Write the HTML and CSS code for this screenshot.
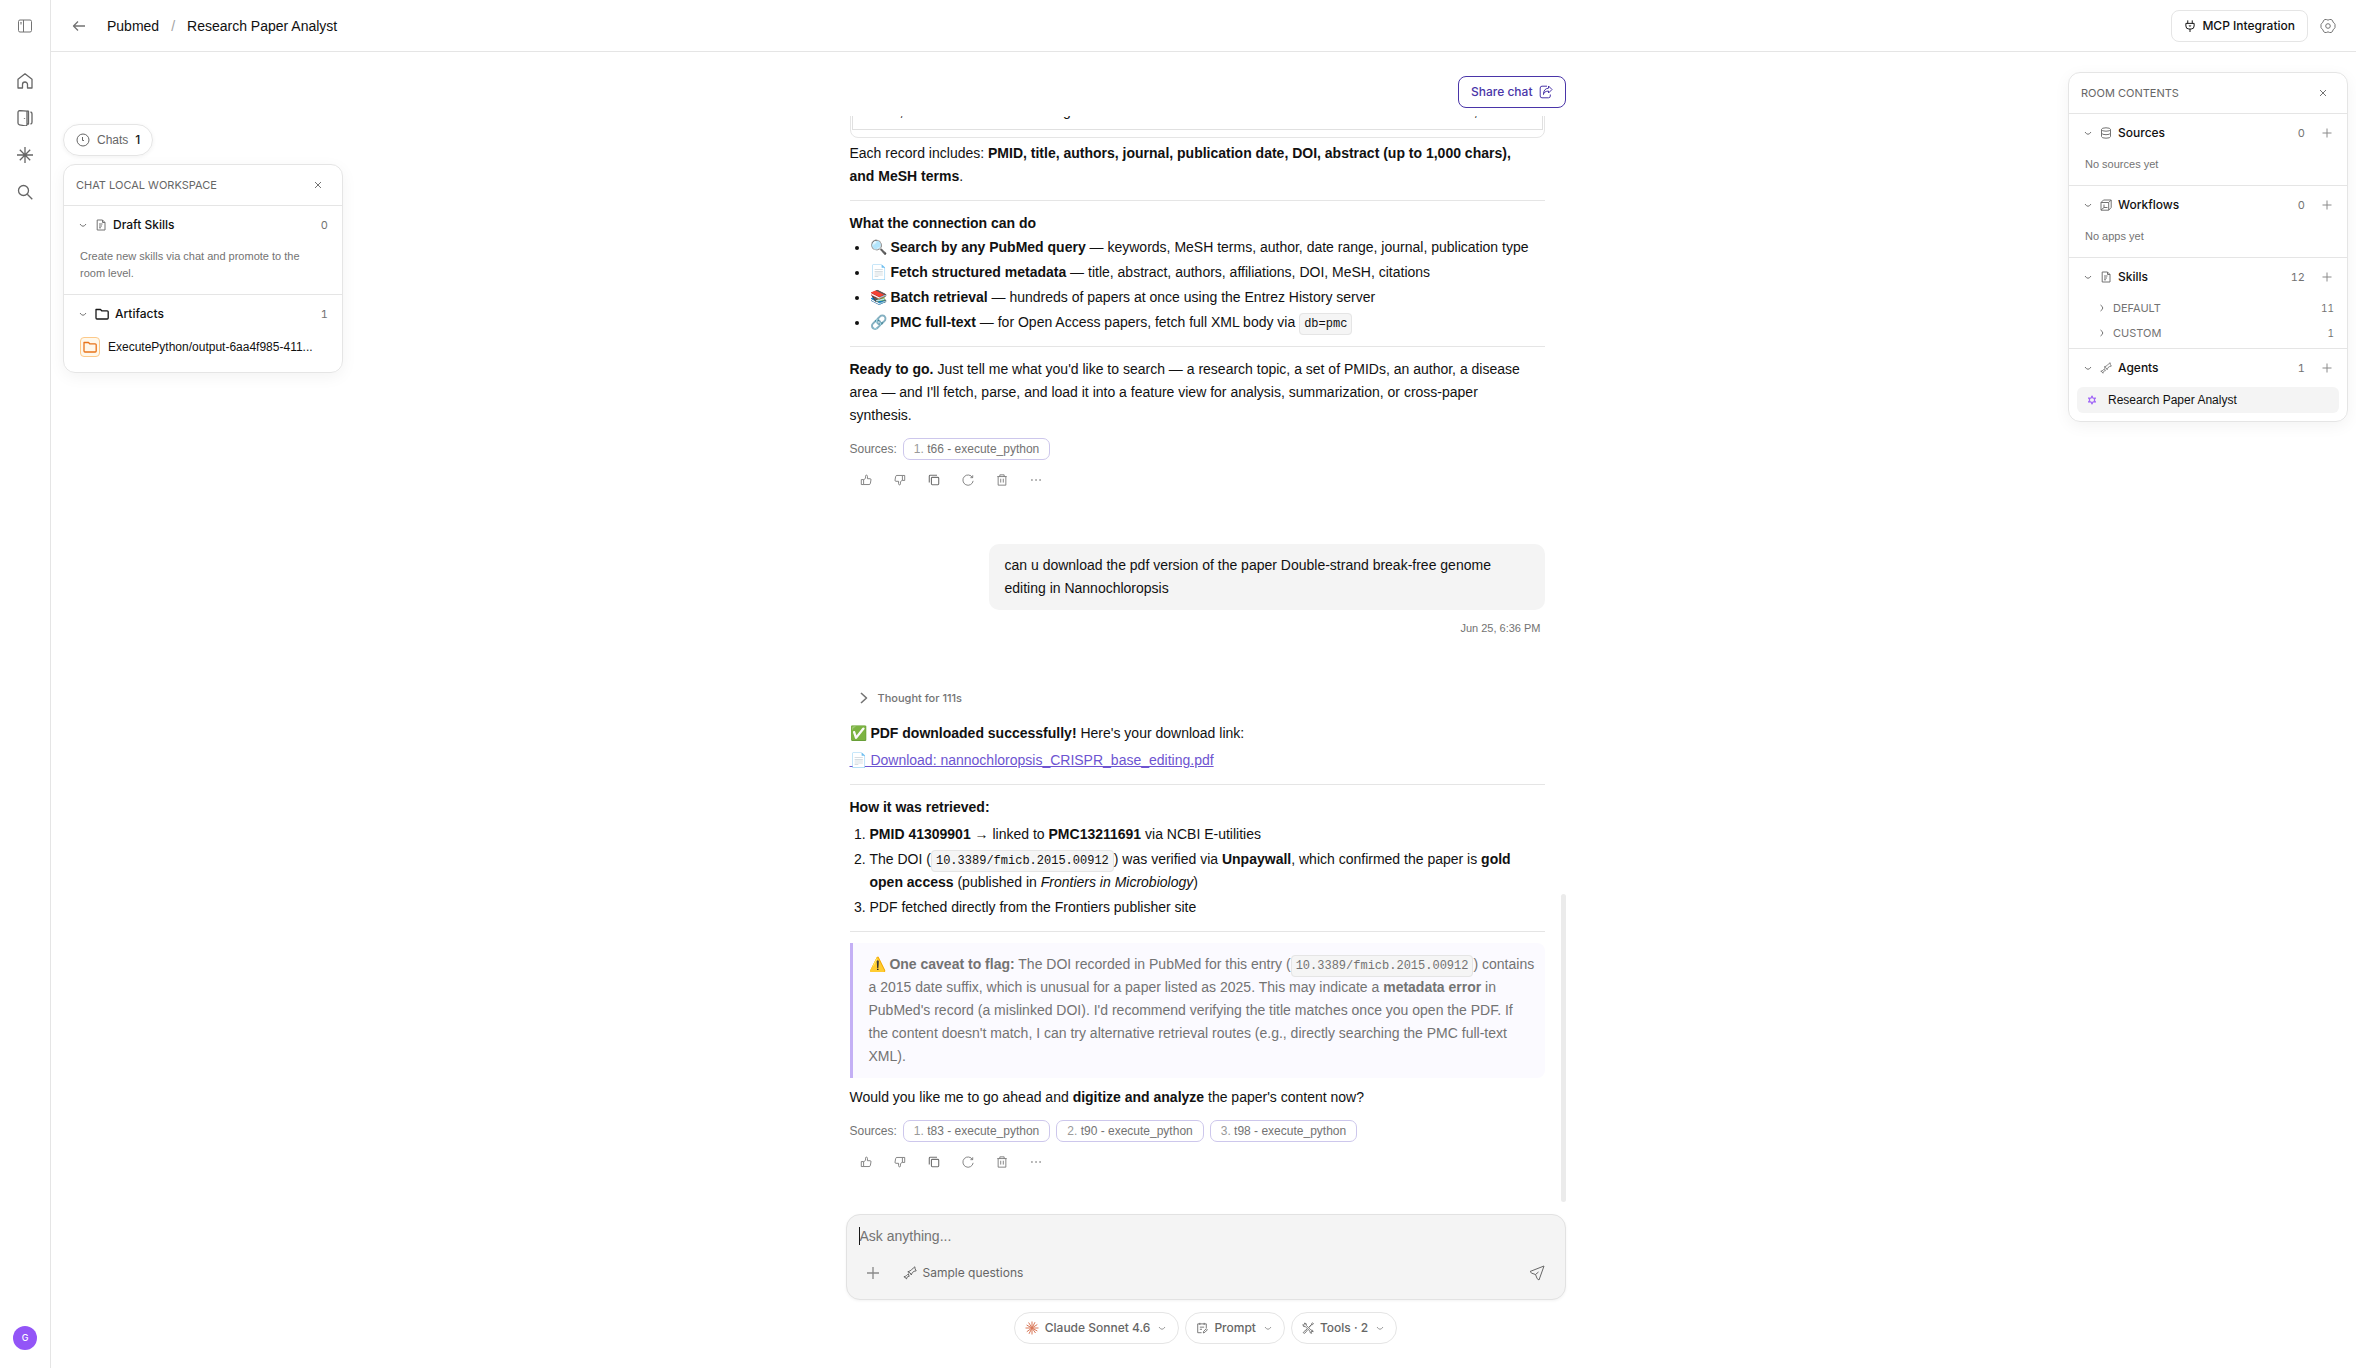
FILE: index.html
```
<!DOCTYPE html>
<html lang="en">
<head>
    <meta charset="UTF-8">
    <title>Research Paper Analyst</title>
    <link rel="stylesheet" href="styles.css">
</head>
<body>
<svg class="sprite" aria-hidden="true">
    <symbol id="i-panel" viewBox="0 0 16 16"><rect x="1.5" y="2" width="13" height="12" rx="1.5"/><path d="M6.5 2v12M3.5 4.5h1M4 4.5v2"/></symbol>
    <symbol id="i-home" viewBox="0 0 16 16"><path d="M1 6.200 8 .8l7 5.400V15h-4.500v-3.500a2.500 2.500 0 0 0-5 0V15H1z"/></symbol>
    <symbol id="i-door" viewBox="0 0 16 16"><path d="M10 1.200 3 .6Q1 .6 1 2.600V13q0 1.500 1.500 1.800L8 15.800q2 .2 2-1.500z"/><path d="M10 1.200h1.500V14H10M13.500 2q1.500.3 1.500 1.800v8.400q0 1.500-1.500 1.800"/><path d="M7.500 8v.8"/></symbol>
    <symbol id="i-star" viewBox="0 0 16 16"><path d="M8 0v16M0 8h16M2.800 2.800l10.400 10.400M13.200 2.800 2.800 13.200"/></symbol>
    <symbol id="i-search" viewBox="0 0 16 16"><circle cx="6.500" cy="6.500" r="5"/><path d="m10.300 10.300 5 5"/></symbol>
    <symbol id="i-back" viewBox="0 0 16 16"><path d="M14 8H2.500M7 3.500 2.500 8 7 12.500"/></symbol>
    <symbol id="i-plug" viewBox="0 0 16 16"><path d="M5 .5v4M11 .5v4M2.500 4.500h11V8q0 4-4 4h-3q-4 0-4-4zM8 12v4M6.500 7.500q1.500 1.500 3 0"/></symbol>
    <symbol id="i-gear" viewBox="0 0 16 16"><path d="M5 1.500h1.300q1.700 1.300 3.400 0H11l1.500.9q.2 2.200 2 3l.5 1V9.500l-.5 1q-1.800.8-2 3L11 14.500H9.700q-1.700-1.300-3.400 0H5l-1.500-1q-.2-2.200-2-3L1 9.500v-3l.5-1q1.800-.8 2-3z"/><circle cx="8" cy="8" r="2.300"/></symbol>
    <symbol id="i-clock" viewBox="0 0 14 14"><circle cx="7" cy="7" r="6"/><path d="M6.500 4v3.500H8"/></symbol>
    <symbol id="i-close" viewBox="0 0 8 8"><path d="m1 1 6 6M7 1 1 7"/></symbol>
    <symbol id="i-down" viewBox="0 0 12 12"><path d="M3 5q3 4.500 6 0"/></symbol>
    <symbol id="i-right" viewBox="0 0 12 12"><path d="M4.500 3q4.500 3 0 6"/></symbol>
    <symbol id="i-doc" viewBox="0 0 12 12"><path d="M2.200 1h5.300L10 3.500V11H2.200zM7.500 1v2.500H10M4 5h3.500M4 7h3M4 8.800h2"/></symbol>
    <symbol id="i-folder" viewBox="0 0 14 14"><path d="M1 2.500h4.500l1.200 1.300h5.500q1 0 1 1V11q0 1-1 1H2q-1 0-1-1z"/></symbol>
    <symbol id="i-db" viewBox="0 0 12 12"><ellipse cx="6" cy="2.500" rx="4.500" ry="1.700"/><path d="M1.500 2.500v7q0 1.700 4.500 1.700t4.500-1.700v-7M1.500 6q0 1.700 4.500 1.700T10.500 6"/></symbol>
    <symbol id="i-flow" viewBox="0 0 12 12"><path d="M3.500 1h7.700v7.500l-2.500 2.700H1V3.500zM1 3.500h7.700v7.700M8.700 3.500 11.200 1M4 5.500v3h3.500M4 8.500 1 11"/></symbol>
    <symbol id="i-spark" viewBox="0 0 14 14"><path d="M11.800.8Q11.700 3 13.200 4.800 11 5 9.400 6.500 8.600 8 8.300 9 7.800 6.600 4.800 5.800 7.500 5 8.600 3.600 10.300 2.200 11.800.8z"/><path d="M5.500 7.800q-.2 1.300.8 2.400-1.600.2-2.200 1-.5 1-.6 1.900-.4-1.700-2.600-2.300 1.700-.4 2.500-1.200.9-1 2.100-1.800z"/></symbol>
    <symbol id="i-plus" viewBox="0 0 12 12"><path d="M6 1.500v9M1.500 6h9"/></symbol>
    <symbol id="i-agent" viewBox="0 0 12 12"><path d="m6 1.200 1.300 2.600 2.900-.2L8.600 6l1.600 2.400-2.900-.2L6 10.800 4.700 8.200l-2.900.2L3.400 6 1.800 3.600l2.900.2z"/></symbol>
    <symbol id="i-share" viewBox="0 0 14 14"><path d="M8 1.200H3q-1.800 0-1.800 1.800v8q0 1.800 1.800 1.800h6.500q1.800 0 1.800-1.800V9.500"/><path d="M4.500 9.500q0-3 5-3.500v2l3.500-3.500L9.500 1v2.200Q4.500 3.500 4.500 9.500z"/></symbol>
    <symbol id="i-up" viewBox="0 0 14 14"><path d="M1.500 6.500h2.700v5.800H1.500zM4.200 6.800 6.500 5V2.500q0-1.200 1-1.200 1.200 0 1.200 1.700V5.500h3q1.300 0 1.100 1.300l-.7 4.200q-.2 1.300-1.500 1.300H4.200"/></symbol>
    <symbol id="i-copy" viewBox="0 0 14 14"><rect x="4" y="4" width="8.500" height="8.500" rx="1"/><path d="M10.500 1.500h-8q-1 0-1 1v7.500"/></symbol>
    <symbol id="i-retry" viewBox="0 0 14 14"><path d="M12.300 4.200A6 6 0 1 0 13 8M12.500 1.500v2.800H9.800"/></symbol>
    <symbol id="i-trash" viewBox="0 0 14 14"><path d="M1.500 3h11M4.500 3V1h5v2M2.500 3v10h9V3M5.500 5.500V10M8.500 5.500V10"/></symbol>
    <symbol id="i-more" viewBox="0 0 14 14"><path d="M1.500 7H3M6.300 7h1.500M11 7h1.500" stroke-width="1.600"/></symbol>
    <symbol id="i-send" viewBox="0 0 16 16"><path d="M15 1 1 6.500q1 2 5.500 3Q8 15 10 15zM6.500 9.500 9.500 7"/></symbol>
    <symbol id="i-prompt" viewBox="0 0 14 14"><path d="M12 7V2.200H2v10.300h4.500M4.500 1v2.400M9.500 1v2.400M4.500 6h5M4.500 8.500H7M8.500 12.800l.5-2 3-3 1.300 1.300-3 3z"/></symbol>
    <symbol id="i-tools" viewBox="0 0 14 14"><path d="M5.200 4.200 10.500 9.500q2.500-.5 2.500 2l-1.500-.8-1 1 .8 1.500q-2.500 0-2-2.500L4 5.500q-3 .5-3-2.500l1.500.8 1-1L2.700 1.300q3-.3 2.500 2.900zM8.300 5.800 11 3l.3-1.300L12.500 1l.8.8-.8 1.200-1.300.3-2.800 2.800M5.800 8.300 2 11.500q-.8.800 0 1.500.7.500 1.300 0l3.200-3.700"/></symbol>
    <symbol id="i-claude" viewBox="0 0 14 14"><path d="M7 7V.5M7 7l3-5.800M7 7l5.300-3.500M7 7h6.500M7 7l5.300 3M7 7l3.500 5M7 7v6.500M7 7l-3 5.800M7 7l-5.200 3.700M7 7H.5M7 7 1.600 4M7 7 3.600 1.500"/></symbol>
</svg>

<div class="app">
    <nav class="sidebar">
        <button class="icon-btn sidebar-toggle" aria-label="Toggle sidebar"><svg class="icon16 thin"><use href="#i-panel"/></svg></button>
        <div class="sidebar-nav">
            <a href="#" aria-label="Home"><svg class="icon16"><use href="#i-home"/></svg></a>
            <a href="#" aria-label="Rooms"><svg class="icon16"><use href="#i-door"/></svg></a>
            <a href="#" aria-label="Agents"><svg class="icon16"><use href="#i-star"/></svg></a>
            <a href="#" aria-label="Search"><svg class="icon16"><use href="#i-search"/></svg></a>
        </div>
        <button class="avatar">G</button>
    </nav>

    <div class="main">
        <header class="topbar">
            <button class="icon-btn" aria-label="Back"><svg class="icon16"><use href="#i-back"/></svg></button>
            <div class="crumbs">
                <a href="#">Pubmed</a>
                <span class="slash">/</span>
                <span>Research Paper Analyst</span>
            </div>
            <button class="outline-btn mcp"><svg class="icon12"><use href="#i-plug"/></svg>MCP Integration</button>
            <button class="icon-btn" aria-label="Settings"><svg class="icon16 thin"><use href="#i-gear"/></svg></button>
        </header>

        <div class="room">
            <aside class="left">
                <button class="pill chats"><svg class="icon14 thin"><use href="#i-clock"/></svg>Chats <b>1</b></button>
                <div class="panel">
                    <div class="panel-head">
                        <h2>Chat local workspace</h2>
                        <button class="icon-btn" aria-label="Close"><svg class="icon8"><use href="#i-close"/></svg></button>
                    </div>
                    <section>
                        <div class="row">
                            <svg class="icon12 thin"><use href="#i-down"/></svg>
                            <svg class="icon12 thin"><use href="#i-doc"/></svg>
                            <h3>Draft Skills</h3>
                            <span class="count">0</span>
                        </div>
                        <p class="hint">Create new skills via chat and promote to the room level.</p>
                    </section>
                    <section>
                        <div class="row">
                            <svg class="icon12 thin"><use href="#i-down"/></svg>
                            <svg class="icon14 dark"><use href="#i-folder"/></svg>
                            <h3>Artifacts</h3>
                            <span class="count">1</span>
                        </div>
                        <a href="#" class="artifact">
                            <span class="folder"><svg class="icon14"><use href="#i-folder"/></svg></span>
                            <span>ExecutePython/output-6aa4f985-411...</span>
                        </a>
                    </section>
                </div>
            </aside>

            <main class="chat">
                <button class="outline-btn share">Share chat<svg class="icon14 thin"><use href="#i-share"/></svg></button>

                <div class="scroller">
                    <div class="messages">
                        <div class="table-wrap">
                            <table>
                                <tr><td>terms, title and abstract matching across records and MeSH fields for citation metadata and author,</td></tr>
                            </table>
                        </div>
                        <p>Each record includes: <b>PMID, title, authors, journal, publication date, DOI, abstract (up to 1,000 chars),<br>and MeSH terms</b>.</p>
                        <hr>
                        <p><b>What the connection can do</b></p>
                        <ul>
                            <li>🔍 <b>Search by any PubMed query</b> — keywords, MeSH terms, author, date range, journal, publication type</li>
                            <li>📄 <b>Fetch structured metadata</b> — title, abstract, authors, affiliations, DOI, MeSH, citations</li>
                            <li>📚 <b>Batch retrieval</b> — hundreds of papers at once using the Entrez History server</li>
                            <li>🔗 <b>PMC full-text</b> — for Open Access papers, fetch full XML body via <code>db=pmc</code></li>
                        </ul>
                        <hr>
                        <p><b>Ready to go.</b> Just tell me what you'd like to search — a research topic, a set of PMIDs, an author, a disease<br>area — and I'll fetch, parse, and load it into a feature view for analysis, summarization, or cross-paper<br>synthesis.</p>
                        <div class="sources">Sources: <a href="#"><i>1.</i> t66 - execute_python</a></div>
                        <div class="actions">
                            <button aria-label="Like"><svg class="icon12 thin"><use href="#i-up"/></svg></button>
                            <button aria-label="Dislike"><svg class="icon12 thin flip"><use href="#i-up"/></svg></button>
                            <button aria-label="Copy"><svg class="icon12"><use href="#i-copy"/></svg></button>
                            <button aria-label="Retry"><svg class="icon12 thin"><use href="#i-retry"/></svg></button>
                            <button aria-label="Delete"><svg class="icon12 thin"><use href="#i-trash"/></svg></button>
                            <button aria-label="More"><svg class="icon12"><use href="#i-more"/></svg></button>
                        </div>

                        <div class="bubble">can u download the pdf version of the paper Double-strand break-free genome<br>editing in Nannochloropsis</div>
                        <time>Jun 25, 6:36 PM</time>

                        <button class="thought"><svg viewBox="0 0 8 12"><path d="m1 1 5.500 5L1 11"/></svg>Thought for 111s</button>
                        <p>✅ <b>PDF downloaded successfully!</b> Here's your download link:</p>
                        <p class="download"><a href="#">📄 Download: nannochloropsis_CRISPR_base_editing.pdf</a></p>
                        <hr>
                        <p><b>How it was retrieved:</b></p>
                        <ol>
                            <li><b>PMID 41309901</b> → linked to <b>PMC13211691</b> via NCBI E-utilities</li>
                            <li>The DOI (<code>10.3389/fmicb.2015.00912</code>) was verified via <b>Unpaywall</b>, which confirmed the paper is <b>gold<br>open access</b> (published in <em>Frontiers in Microbiology</em>)</li>
                            <li>PDF fetched directly from the Frontiers publisher site</li>
                        </ol>
                        <hr>
                        <blockquote>⚠️ <b>One caveat to flag:</b> The DOI recorded in PubMed for this entry (<code>10.3389/fmicb.2015.00912</code>) contains<br>a 2015 date suffix, which is unusual for a paper listed as 2025. This may indicate a <b>metadata error</b> in<br>PubMed's record (a mislinked DOI). I'd recommend verifying the title matches once you open the PDF. If<br>the content doesn't match, I can try alternative retrieval routes (e.g., directly searching the PMC full-text<br>XML).</blockquote>
                        <p>Would you like me to go ahead and <b>digitize and analyze</b> the paper's content now?</p>
                        <div class="sources">Sources: <a href="#"><i>1.</i> t83 - execute_python</a> <a href="#"><i>2.</i> t90 - execute_python</a> <a href="#"><i>3.</i> t98 - execute_python</a></div>
                        <div class="actions">
                            <button aria-label="Like"><svg class="icon12 thin"><use href="#i-up"/></svg></button>
                            <button aria-label="Dislike"><svg class="icon12 thin flip"><use href="#i-up"/></svg></button>
                            <button aria-label="Copy"><svg class="icon12"><use href="#i-copy"/></svg></button>
                            <button aria-label="Retry"><svg class="icon12 thin"><use href="#i-retry"/></svg></button>
                            <button aria-label="Delete"><svg class="icon12 thin"><use href="#i-trash"/></svg></button>
                            <button aria-label="More"><svg class="icon12"><use href="#i-more"/></svg></button>
                        </div>
                    </div>
                    <div class="thumb"></div>
                </div>

                <form class="composer">
                    <input type="text" aria-label="Message" placeholder="Ask anything...">
                    <div class="composer-row">
                        <button type="button" class="add" aria-label="Add"><svg class="icon16"><use href="#i-plus"/></svg></button>
                        <button type="button" class="sample"><svg class="icon14 thin"><use href="#i-spark"/></svg>Sample questions</button>
                        <button type="button" class="send" aria-label="Send"><svg class="icon16 thin"><use href="#i-send"/></svg></button>
                    </div>
                </form>

                <div class="options">
                    <button class="pill"><svg class="icon14 claude"><use href="#i-claude"/></svg>Claude Sonnet 4.6<svg class="icon12 chevron"><use href="#i-down"/></svg></button>
                    <button class="pill"><svg class="icon12 thin"><use href="#i-prompt"/></svg>Prompt<svg class="icon12 chevron"><use href="#i-down"/></svg></button>
                    <button class="pill"><svg class="icon12 thin"><use href="#i-tools"/></svg>Tools · 2<svg class="icon12 chevron"><use href="#i-down"/></svg></button>
                </div>
            </main>

            <aside class="right">
                <div class="panel">
                    <div class="panel-head">
                        <h2>Room contents</h2>
                        <button class="icon-btn" aria-label="Close"><svg class="icon8"><use href="#i-close"/></svg></button>
                    </div>
                    <section>
                        <div class="row">
                            <svg class="icon12 thin"><use href="#i-down"/></svg>
                            <svg class="icon12 thin"><use href="#i-db"/></svg>
                            <h3>Sources</h3>
                            <span class="count">0</span>
                            <button class="icon-btn" aria-label="Add source"><svg class="icon12 thin"><use href="#i-plus"/></svg></button>
                        </div>
                        <p class="hint">No sources yet</p>
                    </section>
                    <section>
                        <div class="row">
                            <svg class="icon12 thin"><use href="#i-down"/></svg>
                            <svg class="icon12 thin"><use href="#i-flow"/></svg>
                            <h3>Workflows</h3>
                            <span class="count">0</span>
                            <button class="icon-btn" aria-label="Add workflow"><svg class="icon12 thin"><use href="#i-plus"/></svg></button>
                        </div>
                        <p class="hint">No apps yet</p>
                    </section>
                    <section>
                        <div class="row">
                            <svg class="icon12 thin"><use href="#i-down"/></svg>
                            <svg class="icon12 thin"><use href="#i-doc"/></svg>
                            <h3>Skills</h3>
                            <span class="count">12</span>
                            <button class="icon-btn" aria-label="Add skill"><svg class="icon12 thin"><use href="#i-plus"/></svg></button>
                        </div>
                        <div class="subrow">
                            <svg class="icon12 thin"><use href="#i-right"/></svg>
                            <h4>Default</h4>
                            <span class="count">11</span>
                        </div>
                        <div class="subrow">
                            <svg class="icon12 thin"><use href="#i-right"/></svg>
                            <h4>Custom</h4>
                            <span class="count">1</span>
                        </div>
                    </section>
                    <section>
                        <div class="row">
                            <svg class="icon12 thin"><use href="#i-down"/></svg>
                            <svg class="icon12 thin"><use href="#i-spark"/></svg>
                            <h3>Agents</h3>
                            <span class="count">1</span>
                            <button class="icon-btn" aria-label="Add agent"><svg class="icon12 thin"><use href="#i-plus"/></svg></button>
                        </div>
                        <a href="#" class="agent"><svg class="icon10"><use href="#i-agent"/></svg>Research Paper Analyst</a>
                    </section>
                </div>
            </aside>
        </div>
    </div>
</div>
</body>
</html>
```
FILE: styles.css
```
* {
    box-sizing: border-box;
}

body {
    margin: 0;
    font: 12px/16px "Liberation Sans", Arial, sans-serif;
    color: #111;
    background: #fff;
}

h2, h3, h4, p, ul, ol, blockquote {
    margin: 0;
    font-size: 12px;
    font-weight: 400;
}

button {
    padding: 0;
    border: none;
    background: none;
    font: inherit;
    color: inherit;
}

a {
    color: inherit;
    text-decoration: none;
}

svg {
    flex: none;
    fill: none;
    stroke: currentColor;
    stroke-width: 1.3;
    stroke-linejoin: round;
}

.sprite {
    display: none;
}

.icon8 { width: 8px; height: 8px; stroke-width: 1; }
.icon10 { width: 10px; height: 10px; }
.icon12 { width: 12px; height: 12px; }
.icon14 { width: 14px; height: 14px; }
.icon16 { width: 16px; height: 16px; }
.thin { stroke-width: 1; }
.flip { transform: scale(-1, -1); }
.dark { color: #171717; }

.icon-btn {
    display: flex;
    align-items: center;
    justify-content: center;
    color: #737373;
}

/* frame */

.app {
    display: flex;
    height: 100vh;
}

.sidebar {
    display: flex;
    flex-direction: column;
    align-items: center;
    width: 51px;
    padding-bottom: 18px;
    border-right: 1px solid #e5e5e5;
    color: #666;
}

.sidebar-toggle {
    height: 52px;
}

.sidebar-nav {
    display: flex;
    flex-direction: column;
    gap: 21px;
    padding-top: 21px;
}

.sidebar-nav svg {
    display: block;
}

.avatar {
    width: 24px;
    height: 24px;
    margin-top: auto;
    border-radius: 50%;
    background: #9355f7;
    color: #fff;
    font: 500 9px/24px Inter, sans-serif;
}

.main {
    display: flex;
    flex-direction: column;
    flex: 1;
    min-width: 0;
}

.topbar {
    display: flex;
    align-items: center;
    height: 52px;
    padding: 0 20px;
    border-bottom: 1px solid #e5e5e5;
}

.crumbs {
    display: flex;
    gap: 12px;
    flex: 1;
    padding-left: 20px;
    font-size: 14px;
}

.slash {
    color: #a3a3a3;
}

.outline-btn {
    display: flex;
    align-items: center;
    gap: 6px;
    height: 32px;
    padding: 0 12px;
    border: 1px solid #e5e5e5;
    border-radius: 8px;
    font-family: Inter, sans-serif;
    font-weight: 500;
}

.mcp {
    margin-right: 12px;
}

.room {
    display: grid;
    grid-template-columns: 280px minmax(0, 1fr) 280px;
    flex: 1;
    min-height: 0;
    padding: 0 8px 0 12px;
}

/* side panels */

.left {
    padding-top: 72px;
}

.right {
    padding-top: 20px;
}

.pill {
    display: flex;
    align-items: center;
    gap: 6px;
    height: 32px;
    padding: 0 10px;
    border: 1px solid #e5e5e5;
    border-radius: 16px;
    color: #666;
    font-family: Inter, sans-serif;
    font-weight: 500;
}

.pill.chats {
    gap: 7px;
    margin-bottom: 8px;
    padding: 0 12px;
    font-family: inherit;
    font-weight: 400;
    box-shadow: 0 1px 4px rgba(0, 0, 0, 0.06);
}

.chats b {
    color: #171717;
    font-family: Inter, sans-serif;
    font-weight: 500;
}

.chevron {
    stroke-width: 1;
    color: #999;
}

.panel {
    border: 1px solid #e5e5e5;
    border-radius: 12px;
    box-shadow: 0 4px 16px rgba(0, 0, 0, 0.05);
}

.panel-head {
    display: flex;
    align-items: center;
    justify-content: space-between;
    height: 40px;
    padding: 0 20px 0 12px;
}

.panel-head h2 {
    font-family: Inter, sans-serif;
    font-size: 11px;
    color: #666;
    text-transform: uppercase;
}

.panel section {
    border-top: 1px solid #e5e5e5;
}

.row {
    display: flex;
    align-items: center;
    gap: 6px;
    height: 37px;
    padding: 0 14px 0 13px;
    color: #737373;
}

.row h3 {
    flex: 1;
    color: #111;
    font-family: Inter, sans-serif;
    font-weight: 500;
}

.row .icon-btn {
    margin-left: 10px;
    color: #8a8a8a;
}

.count {
    font: 11px/16px Inter, sans-serif;
    font-variant-numeric: tabular-nums;
    color: #737373;
}

.hint {
    padding: 5px 16px 12px;
    font-size: 11px;
    line-height: 17px;
    color: #737373;
}

.artifact {
    display: flex;
    align-items: center;
    gap: 8px;
    padding: 5px 16px 15px;
    white-space: nowrap;
}

.folder {
    display: flex;
    padding: 2px;
    border: 1px solid #fcc98a;
    border-radius: 4px;
    background: #fff8eb;
    color: #e8731a;
}

.subrow {
    display: flex;
    align-items: center;
    gap: 5px;
    height: 25px;
    padding: 0 13px 0 27px;
    color: #737373;
}

.subrow:last-child {
    margin-bottom: 3px;
}

.subrow h4 {
    flex: 1;
    font-family: Inter, sans-serif;
    font-size: 11px;
    text-transform: uppercase;
}

.subrow .count {
    font-size: 10px;
}

.agent {
    display: flex;
    align-items: center;
    gap: 11px;
    height: 26px;
    margin: 1px 8px 8px;
    padding: 0 10px;
    border-radius: 6px;
    background: #f4f4f4;
}

.agent svg {
    color: #9b5cf6;
}

/* chat column */

.chat {
    display: flex;
    flex-direction: column;
    width: 100%;
    max-width: 720px;
    min-height: 0;
    margin: 0 auto;
    padding: 24px 0;
}

.share {
    align-self: flex-end;
    margin-bottom: 8px;
    border-color: #4a35a8;
    color: #4a35a8;
}

.scroller {
    position: relative;
    display: flex;
    flex-direction: column;
    justify-content: flex-end;
    flex: 1;
    min-height: 0;
    overflow: hidden;
}

.thumb {
    position: absolute;
    right: 0;
    bottom: 0;
    width: 5px;
    height: 308px;
    border-radius: 3px;
    background: #ebebeb;
}

.messages {
    display: flex;
    flex-direction: column;
    padding: 0 21px 28px 4px;
    font-size: 14px;
    line-height: 23px;
}

.messages p,
.messages li {
    font-size: 14px;
    white-space: nowrap;
}

.table-wrap {
    margin-bottom: 4px;
    padding: 0 1px 7px;
    border: 1px solid #e5e5e5;
    border-radius: 8px;
}

table {
    width: 100%;
    border-collapse: collapse;
}

td {
    padding: 6px 12px;
    border: 1px solid #e0e0e0;
    white-space: nowrap;
}

hr {
    width: 100%;
    margin: 12px 0 11px;
    border: 0;
    border-top: 1px solid #e5e5e5;
}

ul, ol {
    display: flex;
    flex-direction: column;
    gap: 2px;
    padding-left: 20px;
}

ul {
    margin-top: 1px;
}

ol,
.download {
    margin-top: 4px;
}

.download a {
    color: #6d54d1;
    text-decoration: underline;
}

code {
    padding: 3px 4px;
    border: 1px solid #e5e5e5;
    border-radius: 4px;
    background: #f5f5f5;
    font: 12px/16px "Liberation Mono", monospace;
}

.sources {
    display: flex;
    align-items: center;
    gap: 6px;
    margin-top: 11px;
    font-size: 12px;
    line-height: 20px;
    color: #737373;
}

.sources a {
    padding: 0 10px;
    border: 1px solid #cdc7ec;
    border-radius: 7px;
}

.sources i {
    color: #999;
    font-style: normal;
}

.actions {
    display: flex;
    gap: 10px;
    margin-top: 8px;
    padding-left: 4px;
    color: #737373;
}

.actions button {
    display: flex;
    align-items: center;
    justify-content: center;
    width: 24px;
    height: 24px;
}

.bubble {
    align-self: flex-end;
    width: 80%;
    margin-top: 52px;
    padding: 10px 16px;
    border-radius: 10px;
    background: #f4f4f4;
    white-space: nowrap;
}

time {
    align-self: flex-end;
    margin-top: 10px;
    padding-right: 4px;
    font-size: 11px;
    line-height: 16px;
    color: #737373;
}

.thought {
    display: flex;
    align-items: center;
    align-self: flex-start;
    gap: 10px;
    height: 24px;
    margin: 50px 0 12px;
    padding-left: 10px;
    font: 500 11px/16px Inter, sans-serif;
    color: #737373;
}

.thought svg {
    width: 8px;
    height: 12px;
    stroke-width: 1.6;
}

blockquote {
    margin-bottom: 8px;
    padding: 10px 0 10px 16px;
    border-left: 3px solid #c4b0f5;
    border-radius: 0 8px 8px 0;
    background: #fbfaff;
    font-size: 14px;
    color: #737373;
    white-space: nowrap;
}

/* composer */

.composer {
    display: flex;
    flex-direction: column;
    gap: 16px;
    margin-top: 12px;
    padding: 12px 12px 14px;
    border: 1px solid #e2e2e2;
    border-radius: 14px;
    background: #f4f4f4;
    box-shadow: 0 1px 3px rgba(0, 0, 0, 0.05);
}

.composer input {
    height: 18px;
    padding: 0;
    border: 0;
    border-left: 1px solid #171717;
    outline: none;
    background: none;
    font: 14px/18px "Liberation Sans", Arial, sans-serif;
}

.composer input::placeholder {
    color: #737373;
}

.composer-row {
    display: flex;
    align-items: center;
    height: 24px;
    padding: 0 8px 0 6px;
    color: #666;
}

.composer-row button {
    display: flex;
    align-items: center;
    gap: 6px;
}

.composer-row .add {
    color: #8a8a8a;
}

.add svg {
    stroke-width: 1;
}

.sample {
    margin-left: 22px;
    font-family: Inter, sans-serif;
}

.send {
    margin-left: auto;
}

.options {
    display: flex;
    justify-content: center;
    gap: 6px;
    margin-top: 12px;
}

.claude {
    stroke-width: 1;
    color: #d97757;
}
```
